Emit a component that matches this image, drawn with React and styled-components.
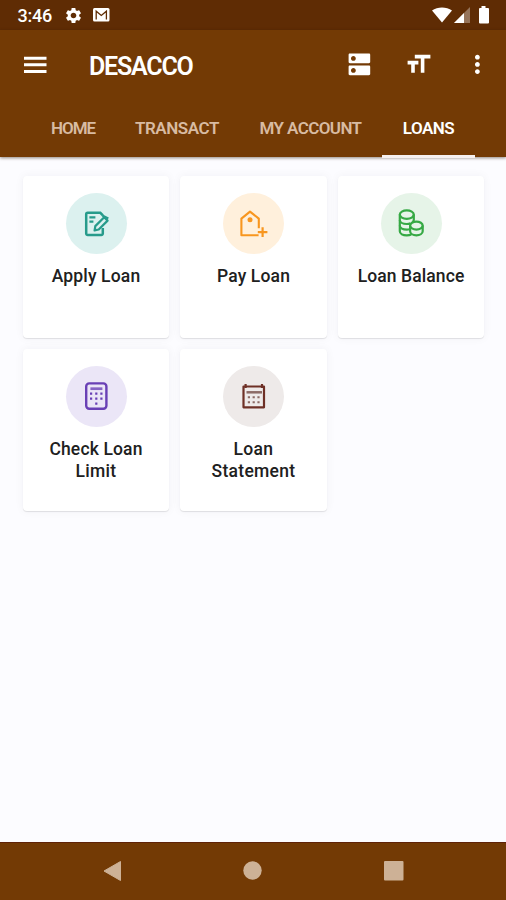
import React from "react";
import styled, { createGlobalStyle } from "styled-components";
import { MdDns, MdFormatSize, MdMoreVert, MdSettings } from "react-icons/md";

const GlobalStyle = createGlobalStyle`
  *, *::before, *::after { box-sizing: border-box; }
  body { margin: 0; background: #fcfcff; font-family: Roboto, sans-serif; }
  svg { display: block; }
`;

const Screen = styled.div`
  width: 506px;
  height: 900px;
  display: flex;
  flex-direction: column;
  background: #fcfcff;
  overflow: hidden;
`;

const StatusBar = styled.div`
  height: 30px;
  display: flex;
  align-items: center;
  justify-content: space-between;
  padding: 0 16px 0 17.5px;
  background: #5f2c04;
  color: #fff;
`;

const StatusGroup = styled.div`
  display: flex;
  align-items: center;
  gap: ${(p) => p.$gap}px;
`;

const Clock = styled.span`
  width: 34px;
  margin-right: 2px;
  padding-top: 1px;
  font-size: 18px;
  font-weight: 500;
  line-height: 20px;
  letter-spacing: ${(p) => p.$track}px;
  white-space: nowrap;
`;

const Header = styled.header`
  height: 127px;
  flex: none;
  background: #733a05;
  color: #fff;
  box-shadow: 0 1px 3px rgba(40, 15, 0, 0.5);
  z-index: 1;
`;

const Toolbar = styled.div`
  height: 69px;
  display: flex;
  align-items: center;
  padding: 0 14.6px 0 23.5px;
`;

const Title = styled.h1`
  flex: 1;
  margin: 4px 0 0 42.5px;
  font-size: 25px;
  font-weight: 600;
  line-height: 30px;
  letter-spacing: ${(p) => p.$track}px;
`;

const Actions = styled.div`
  display: flex;
  gap: 30px;
`;

const Tabs = styled.nav`
  height: 59px;
  display: flex;
  padding-left: 31px;
`;

const Tab = styled.div`
  width: ${(p) => p.$width}px;
  height: 59px;
  padding-top: 17px;
  text-align: center;
  font-size: 17px;
  font-weight: 600;
  line-height: 24px;
  letter-spacing: ${(p) => p.$track}px;
  white-space: nowrap;
  color: ${(p) => (p.$active ? "#fff" : "#d8bba2")};
  border-bottom: 3.5px solid ${(p) => (p.$active ? "#f6f0f0" : "transparent")};
`;

const Content = styled.main`
  flex: 1;
  display: grid;
  grid-template-columns: 146px 147px 146px;
  grid-auto-rows: 162px;
  align-content: start;
  gap: 11px;
  padding: 19px 22px 0 23px;
`;

const Card = styled.div`
  display: flex;
  flex-direction: column;
  align-items: center;
  padding-top: 16.5px;
  background: #fff;
  border-radius: 4px;
  box-shadow: 0 1px 1px rgba(0, 0, 0, 0.1), 0 0 10px rgba(30, 30, 50, 0.05);
`;

const IconCircle = styled.div`
  width: 61px;
  height: 61px;
  display: grid;
  place-items: center;
  border-radius: 50%;
  background: ${(p) => p.$bg};
`;

const Label = styled.div`
  margin-top: 11px;
  text-align: center;
  font-size: 17.5px;
  font-weight: 500;
  line-height: 22px;
  color: #202020;
`;

const Line = styled.div`
  white-space: nowrap;
  letter-spacing: ${(p) => p.$track}px;
`;

const NavBar = styled.footer`
  height: 58px;
  display: flex;
  align-items: center;
  justify-content: space-between;
  padding: 0 102.5px 2px 102.5px;
  background: #733a05;
  border-top: 1px solid #5f2208;
`;

const Icon = ({ size = 32, stroke, children }) => (
  <svg width={size} height={size} viewBox="0 0 32 32" fill="none" stroke={stroke} strokeWidth="2.2">
    {children}
  </svg>
);

const ApplyIcon = () => (
  <Icon stroke="#279b8b">
    <path d="M22.800 21v5.500a1.500 1.500 0 0 1-1.500 1.500H7.700a1.500 1.500 0 0 1-1.500-1.500V7.300a1.500 1.500 0 0 1 1.500-1.500h12.600l2.600 2.600" strokeWidth="2.500" />
    <path d="M9.400 10.400h6M9.400 14.600h4" strokeWidth="2.100" />
    <path d="M14.600 23.400l.7-4.300 8.900-8.900 3.400 3.400-8.900 8.900z" strokeWidth="2.200" strokeLinejoin="round" />
    <path d="M22.300 8.400l6 3" strokeWidth="2.200" />
  </Icon>
);

const PayIcon = () => (
  <Icon stroke="#f8961f">
    <path d="M20.800 21.200V11.600L12 4.600l-8.600 7v16.700h17.200" strokeWidth="2.100" strokeLinejoin="round" />
    <circle cx="12" cy="12.700" r="2.500" fill="#f8961f" stroke="none" />
    <path d="M24.600 20.200v9.800M19.800 25.100h9.600" strokeWidth="2.200" />
  </Icon>
);

const BalanceIcon = () => (
  <Icon stroke="#36a944">
    <g strokeWidth="2.200">
      <ellipse cx="11.800" cy="7.600" rx="7" ry="4.200" />
      <path d="M4.800 7.600v16.600c0 2.500 3 4.100 7 4.100 1.700 0 3.200-.3 4.400-.9" />
      <path d="M18.800 7.600v5.500c0 .8-.5 1.500-1.300 2.100" />
      <path d="M4.800 13c0 2.400 3 4 7 4 1.300 0 2.500-.2 3.600-.6M4.800 18.600c0 2.400 3 4 7 4 1 0 2-.1 2.900-.3" />
      <ellipse cx="21.400" cy="18.600" rx="6.300" ry="4" />
      <path d="M15.100 18.600v5.700c0 2.300 2.800 4 6.300 4s6.300-1.700 6.300-4v-5.700" />
    </g>
  </Icon>
);

const LimitIcon = () => (
  <Icon stroke="#6940b5">
    <rect x="6.200" y="3.400" width="20.200" height="25.400" rx="3" strokeWidth="2.400" />
    <path d="M10.400 8.700h12" stroke="#8664c4" strokeWidth="2.700" />
    <path
      d="M10 13.700h2.200M15.200 13.700h2.200M20.300 13.700h2.200M10 18.700h2.200M15.200 18.700h2.200M20.300 18.700h2.200M15.200 23.700h2.200"
      strokeWidth="2.200"
    />
  </Icon>
);

const StatementIcon = () => (
  <Icon stroke="#6e3026">
    <path d="M5.500 6.500h20.500v20.800H5.500z" strokeWidth="2.200" strokeLinejoin="round" />
    <path d="M7.600 4v4M24 4v4" strokeWidth="2.200" />
    <path d="M8.500 12.300h15.500" stroke="#8c6b66" strokeWidth="2.500" />
    <path
      d="M9.800 17.300H12M14.600 17.300h2.200M19.400 17.300h2.200M9.800 22.200H12M14.600 22.200h2.200M19.400 22.200h2.200"
      stroke="#8c6b66"
      strokeWidth="2"
    />
  </Icon>
);

const TABS = [
  { text: "HOME", width: 84, track: -1 },
  { text: "TRANSACT", width: 124, track: -0.45 },
  { text: "MY ACCOUNT", width: 143, track: -0.6 },
  { text: "LOANS", width: 93, track: -0.5, active: true },
];

const CARDS = [
  { lines: [["Apply Loan", 0.15]], bg: "#dcf1ef", icon: ApplyIcon },
  { lines: [["Pay Loan", 0.15]], bg: "#fff0dc", icon: PayIcon },
  { lines: [["Loan Balance", 0.1]], bg: "#e6f4e8", icon: BalanceIcon },
  { lines: [["Check Loan", 0.15], ["Limit", 0.3]], bg: "#ebe6f7", icon: LimitIcon },
  { lines: [["Loan", 0.3], ["Statement", 0.3]], bg: "#eeeae9", icon: StatementIcon },
];

export default function App() {
  return (
    <Screen>
      <GlobalStyle />
      <StatusBar>
        <StatusGroup $gap={10}>
          <Clock $track={-0.2}>3:46</Clock>
          <MdSettings size={19} />
          <svg width="17" height="14" viewBox="0 0 17 14">
            <rect width="16.500" height="13.500" rx="1.500" fill="#fff" />
            <path d="M3.200 11.500V3.200l5.100 4.200 5.100-4.200v8.300" fill="none" stroke="#5f2c04" strokeWidth="1.300" />
          </svg>
        </StatusGroup>
        <StatusGroup $gap={2}>
          <svg width="20" height="16" viewBox="0 0 20 16">
            <path d="M0 3.400C5.500-.6 14.500-.6 20 3.400L10 15.500z" fill="#fff" />
          </svg>
          <svg width="16" height="16" viewBox="0 0 16 16">
            <path d="M16 0v16H0z" fill="#96745a" />
            <path d="M10 6v10H0z" fill="#fff" />
          </svg>
          <svg width="18" height="18" viewBox="0 0 18 18">
            <path d="M9.500 0h4v2H16q1 0 1 1v13.500q0 1-1 1H8q-1 0-1-1V3q0-1 1-1h1.500z" fill="#fff" />
          </svg>
        </StatusGroup>
      </StatusBar>
      <Header>
        <Toolbar>
          <svg width="23" height="18" viewBox="0 0 23 18">
            <path d="M0 2.200h22.500M0 8.800h22.500M0 15.400h22.500" stroke="#fff" strokeWidth="3" />
          </svg>
          <Title $track={-1.2}>DESACCO</Title>
          <Actions>
            <MdDns size={28.8} />
            <MdFormatSize size={28.8} />
            <MdMoreVert size={28.8} />
          </Actions>
        </Toolbar>
        <Tabs>
          {TABS.map((t) => (
            <Tab key={t.text} $width={t.width} $track={t.track} $active={t.active}>
              {t.text}
            </Tab>
          ))}
        </Tabs>
      </Header>
      <Content>
        {CARDS.map(({ lines, bg, icon: Glyph }) => (
          <Card key={bg}>
            <IconCircle $bg={bg}>
              <Glyph />
            </IconCircle>
            <Label>
              {lines.map(([text, track]) => (
                <Line key={text} $track={track}>
                  {text}
                </Line>
              ))}
            </Label>
          </Card>
        ))}
      </Content>
      <NavBar>
        <svg width="19" height="22" viewBox="0 0 19 22">
          <path d="M1 11L17.500 1.500v19z" fill="#cdb196" stroke="#cdb196" strokeLinejoin="round" />
        </svg>
        <svg width="19" height="19" viewBox="0 0 19 19">
          <circle cx="9.500" cy="9.500" r="9.200" fill="#cdb196" />
        </svg>
        <svg width="20" height="20" viewBox="0 0 20 20">
          <rect width="19.500" height="19.500" rx="1" fill="#cdb196" />
        </svg>
      </NavBar>
    </Screen>
  );
}
